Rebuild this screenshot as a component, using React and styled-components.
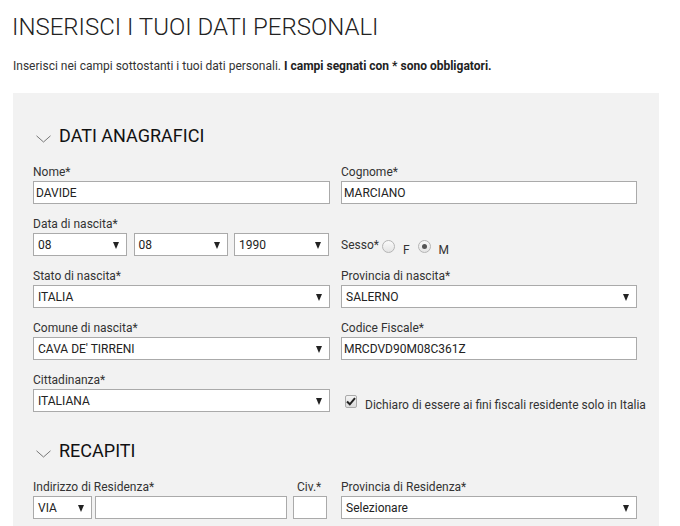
import React from "react";
import styled, { createGlobalStyle } from "styled-components";

const Global = createGlobalStyle`
  html, body { margin: 0; padding: 0; background: #fff; }
  body { font-family: Roboto, "Liberation Sans", Arial, sans-serif; color: #333; }
  * { box-sizing: border-box; }
`;

const Page = styled.div`
  padding: 13px 21px 0 12px;
  width: 680px;
`;

const Title = styled.h1`
  margin: 0;
  font-size: 24px;
  line-height: 28px;
  font-weight: 300;
  color: #222;
`;

const Intro = styled.p`
  margin: 17px 0 0 1px;
  font-size: 12px;
  line-height: 16px;
  color: #333;
  strong { font-weight: 700; color: #222; }
`;

const Panel = styled.div`
  margin: 19px 0 0 1px;
  background: #f2f2f2;
  padding: 32px 22px 40px 20px;
  width: 646px;
`;

const Section = styled.section`
  & + & { margin-top: 28px; }
`;

const SectionHead = styled.h2`
  margin: 0 0 17px;
  display: flex;
  align-items: center;
  gap: 8px;
  font-size: 18px;
  line-height: 22px;
  font-weight: 400;
  color: #111;
  svg { margin: 6px 0 0 3px; }
`;

const Grid = styled.div`
  display: grid;
  grid-template-columns: 297px 296px;
  column-gap: 11px;
  row-gap: 12px;
`;

const Field = styled.div`
  display: flex;
  flex-direction: column;
`;

const Label = styled.label`
  font-size: 12px;
  line-height: 16px;
  color: #333;
  margin-bottom: 1px;
  display: block;
`;

const TextInput = styled.input`
  height: 23px;
  width: ${(p) => p.$w || "100%"};
  border: 1px solid #aaa;
  background: #fff;
  padding: 0 2px;
  font-family: inherit;
  font-size: 12px;
  color: #222;
  outline: none;
  margin: 0 0 0 ${(p) => p.$ml || 0}px;
`;

const SelectBox = styled.div`
  height: 23px;
  width: ${(p) => p.$w || "100%"};
  border: 1px solid #aaa;
  background: #fff;
  display: flex;
  align-items: center;
  justify-content: space-between;
  padding: 0 7px 0 4px;
  font-size: 12px;
  color: #222;
  flex: none;
`;

const Arrow = styled.span`
  width: 0;
  height: 0;
  border-left: 3.5px solid transparent;
  border-right: 3.5px solid transparent;
  border-top: 7px solid #222;
  margin-top: 1px;
`;

const Row = styled.div`
  display: flex;
  gap: ${(p) => p.$gap || 6}px;
`;

const SexRow = styled.div`
  display: flex;
  align-items: center;
  height: 23px;
  margin-top: 17px;
  font-size: 12px;
  color: #333;
`;

const Radio = styled.span`
  width: 13px;
  height: 13px;
  border-radius: 50%;
  border: 1px solid #b5b5b5;
  background: linear-gradient(#fafafa, #e4e4e4);
  display: inline-flex;
  align-items: center;
  justify-content: center;
  margin: 3px 0 0 ${(p) => p.$ml || 0}px;
  &::after {
    content: "";
    width: 5px;
    height: 5px;
    border-radius: 50%;
    background: ${(p) => (p.$checked ? "#555" : "transparent")};
  }
`;

const RadioText = styled.span`
  margin: 10px 0 0 ${(p) => p.$ml || 8}px;
  font-size: 12px;
  color: #333;
`;

const CheckRow = styled.div`
  display: flex;
  align-items: center;
  margin-top: 23px;
  padding-left: 4px;
  font-size: 12px;
  color: #333;
  white-space: nowrap;
`;

const CheckBox = styled.span`
  width: 13px;
  height: 13px;
  border: 1px solid #aaa;
  border-radius: 2px;
  background: linear-gradient(#f4f4f4, #dcdcdc);
  display: inline-flex;
  align-items: center;
  justify-content: center;
  margin-right: 8px;
  margin-top: -4px;
`;

const CheckText = styled.span`
  margin-top: 3px;
`;

const AddrLabels = styled.div`
  display: flex;
  justify-content: space-between;
`;

const CivLabel = styled(Label)`
  width: 37px;
  padding-left: 4px;
`;

const Chevron = () => (
  <svg width="15" height="8" viewBox="0 0 15 8">
    <path d="M0.5 0.8 L7.5 7 L14.5 0.8" fill="none" stroke="#777" strokeWidth="1" />
  </svg>
);

const Select = ({ value, w }) => (
  <SelectBox $w={w}>
    <span>{value}</span>
    <Arrow />
  </SelectBox>
);

export default function App() {
  return (
    <>
      <Global />
      <Page>
        <Title>INSERISCI I TUOI DATI PERSONALI</Title>
        <Intro>
          Inserisci nei campi sottostanti i tuoi dati personali.{" "}
          <strong>I campi segnati con * sono obbligatori.</strong>
        </Intro>
        <Panel>
          <Section>
            <SectionHead>
              <Chevron />
              DATI ANAGRAFICI
            </SectionHead>
            <Grid>
              <Field>
                <Label>Nome*</Label>
                <TextInput defaultValue="DAVIDE" />
              </Field>
              <Field>
                <Label>Cognome*</Label>
                <TextInput defaultValue="MARCIANO" />
              </Field>
              <Field>
                <Label>Data di nascita*</Label>
                <Row $gap={6.5}>
                  <Select value="08" w="94px" />
                  <Select value="08" w="94px" />
                  <Select value="1990" w="95px" />
                </Row>
              </Field>
              <Field>
                <SexRow>
                  Sesso*
                  <Radio $ml={3} />
                  <RadioText>F</RadioText>
                  <Radio $ml={8} $checked />
                  <RadioText>M</RadioText>
                </SexRow>
              </Field>
              <Field>
                <Label>Stato di nascita*</Label>
                <Select value="ITALIA" />
              </Field>
              <Field>
                <Label>Provincia di nascita*</Label>
                <Select value="SALERNO" />
              </Field>
              <Field>
                <Label>Comune di nascita*</Label>
                <Select value="CAVA DE' TIRRENI" />
              </Field>
              <Field>
                <Label>Codice Fiscale*</Label>
                <TextInput defaultValue="MRCDVD90M08C361Z" />
              </Field>
              <Field>
                <Label>Cittadinanza*</Label>
                <Select value="ITALIANA" />
              </Field>
              <Field>
                <CheckRow>
                  <CheckBox>
                    <svg width="10" height="9" viewBox="0 0 10 9">
                      <path d="M1 4.5 L3.8 7.3 L9 1.2" fill="none" stroke="#222" strokeWidth="2" />
                    </svg>
                  </CheckBox>
                  <CheckText>Dichiaro di essere ai fini fiscali residente solo in Italia</CheckText>
                </CheckRow>
              </Field>
            </Grid>
          </Section>
          <Section>
            <SectionHead>
              <Chevron />
              RECAPITI
            </SectionHead>
            <Grid>
              <Field>
                <AddrLabels>
                  <Label>Indirizzo di Residenza*</Label>
                  <CivLabel>Civ.*</CivLabel>
                </AddrLabels>
                <Row $gap={3}>
                  <Select value="VIA" w="59px" />
                  <TextInput $w="192px" />
                  <TextInput $w="34px" $ml={3} />
                </Row>
              </Field>
              <Field>
                <Label>Provincia di Residenza*</Label>
                <Select value="Selezionare" />
              </Field>
            </Grid>
          </Section>
        </Panel>
      </Page>
    </>
  );
}
